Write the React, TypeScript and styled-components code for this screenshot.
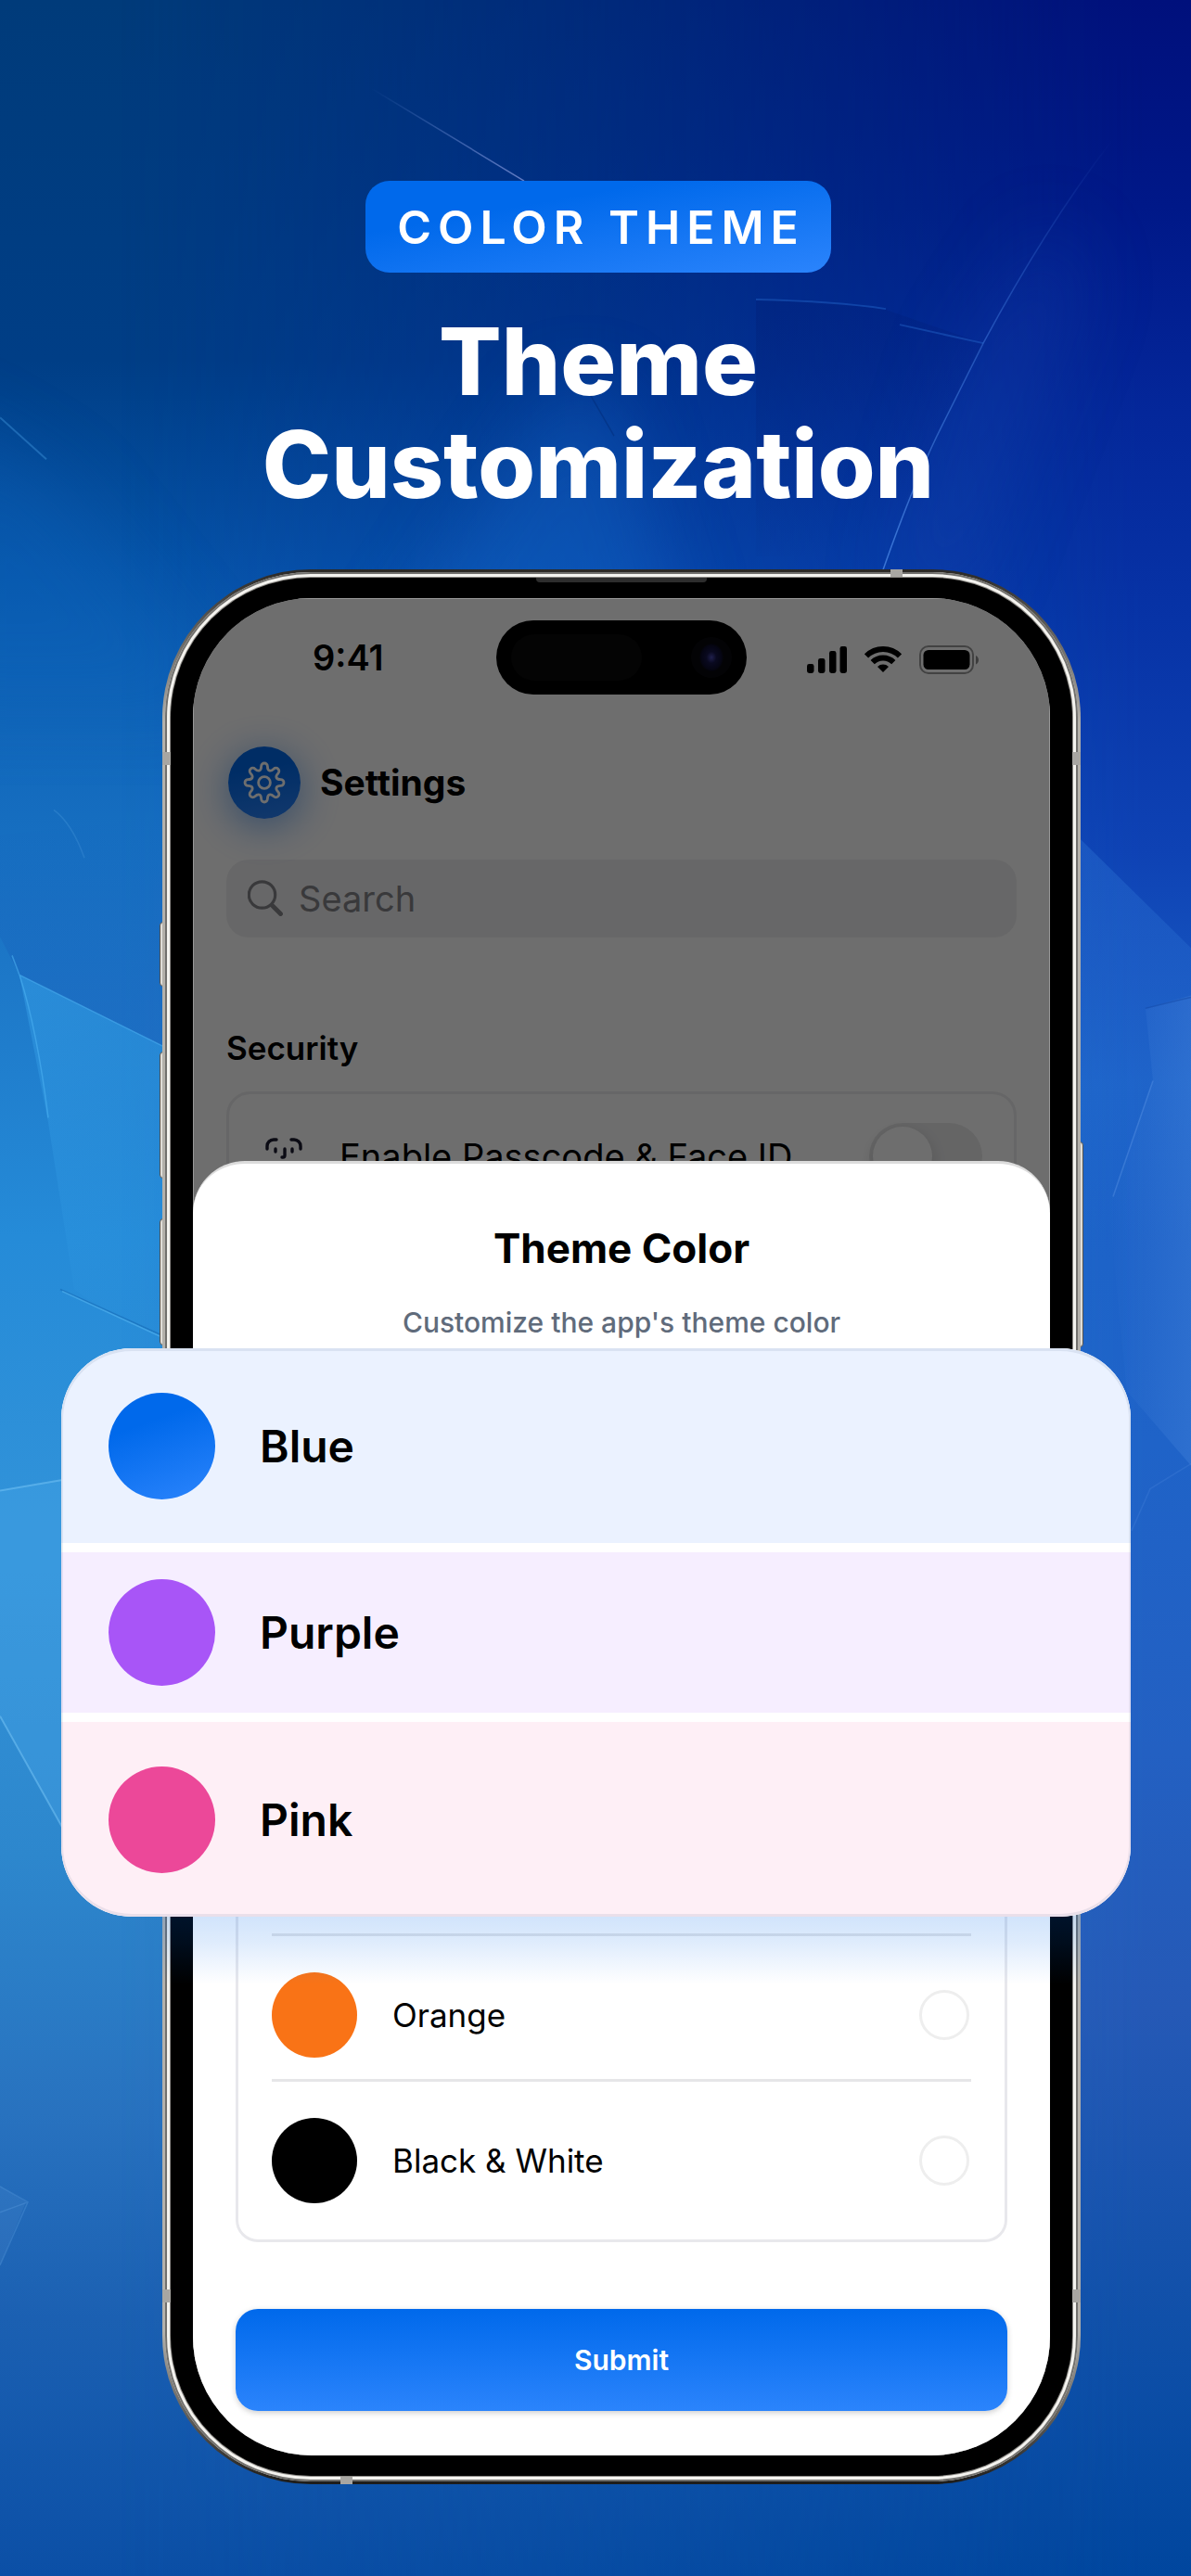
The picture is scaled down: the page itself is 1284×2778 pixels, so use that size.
import styled, { createGlobalStyle, css } from "styled-components";

const GlobalStyle = createGlobalStyle`
  * { box-sizing: border-box; }
  body {
    margin: 0;
    font-family: Inter, "Liberation Sans", sans-serif;
    color: #000;
  }
  button, input { font: inherit; color: inherit; }
`;

const blueGradient = "linear-gradient(170deg, #0069eb 30%, #2b84fc 100%)";

/* ---------- page ---------- */

const Page = styled.main`
  position: relative;
  overflow: hidden;
  background: linear-gradient(
    180deg,
    #003b7a 0%,
    #003e86 14%,
    #0654a8 22%,
    #136abd 30%,
    #1d78c8 38%,
    #258bd8 48%,
    #3293d9 60%,
    #2d87cd 72%,
    #2872bf 82%,
    #1b60b2 90%,
    #0b4fa6 100%
  );

  &::before {
    content: "";
    position: absolute;
    inset: 0;
    background: linear-gradient(
      180deg,
      #00107c 0%,
      #001888 8%,
      #04279a 16%,
      #0733a6 24%,
      #0e42b4 33%,
      #1b5fc6 42%,
      #1f63c8 56%,
      #2360c2 68%,
      #2559b6 78%,
      #1050a9 90%,
      #00469e 100%
    );
    mask-image: linear-gradient(90deg, transparent 10%, rgba(0, 0, 0, 0.4) 50%, #000 96%);
  }
`;

const Facets = styled.svg`
  position: absolute;
  inset: 0;
  width: 100%;
  height: 100%;
`;

const Intro = styled.header`
  position: relative;
  display: flex;
  flex-direction: column;
  align-items: center;
  gap: 40px;
  padding: 195px 92px 58px 98px;
  text-align: center;
  color: #fff;
`;

const Badge = styled.p`
  margin: 0;
  padding: 20px 28px 19px 34px;
  border-radius: 26px;
  background: ${blueGradient};
  font-size: 50px;
  font-weight: 600;
  line-height: 60px;
  letter-spacing: 7px;
`;

const Title = styled.h1`
  margin: 0;
  font-size: 100px;
  font-weight: 800;
  line-height: 111px;
`;

/* ---------- phone ---------- */

const Phone = styled.div`
  position: relative;
  margin: 0 119px 100px 175px;
`;

const Frame = styled.div`
  position: relative;
  padding: 3px;
  border-radius: 160px;
  background: linear-gradient(180deg, #2b2926 0%, #b4b1ab 8%, #b4b1ab 92%, #1d1c1a 100%);
`;

const Rim = styled.div`
  padding: 6px;
  border-radius: 157px;
  background: #f4f3ef;
  box-shadow: inset 0 0 0 2px #71706d;
`;

const Bezel = styled.div`
  padding: 22px 24px;
  border-radius: 151px;
  background: #000;
  box-shadow: 0 0 0 1px #8d8b87;
`;

const SideButton = styled.span<{ $side: "left" | "right"; $top: number; $height: number }>`
  position: absolute;
  top: ${(p) => p.$top}px;
  ${(p) => p.$side}: -3px;
  width: 8px;
  height: ${(p) => p.$height}px;
  border: 1px solid #55534f;
  border-radius: 4px;
  background: #dedcd7;
`;

const band = css`
  position: absolute;
  background: #a8a6a2;
`;

const SideBand = styled.span<{ $side: "left" | "right"; $top: number }>`
  ${band}
  top: ${(p) => p.$top}px;
  ${(p) => p.$side}: 0;
  width: 9px;
  height: 14px;
`;

const EdgeBand = styled.span<{ $edge: "top" | "bottom"; $left: number }>`
  ${band}
  ${(p) => p.$edge}: 0;
  left: ${(p) => p.$left}px;
  width: 13px;
  height: 8px;
`;

const Speaker = styled.span`
  position: absolute;
  top: 9px;
  left: 50%;
  width: 184px;
  height: 5px;
  margin-left: -92px;
  border-radius: 0 0 4px 4px;
  background: #2d2d2d;
`;

const Screen = styled.div`
  display: grid;
  overflow: hidden;
  border-radius: 128px;
  background: #fff;
`;

/* ---------- settings screen under the sheet ---------- */

const Settings = styled.section`
  position: relative;
  grid-area: 1 / 1;

  &::after {
    content: "";
    position: absolute;
    inset: 0;
    background: rgba(0, 0, 0, 0.57);
    box-shadow: inset 0 0 0 1px rgba(255, 255, 255, 0.3);
  }
`;

const StatusBar = styled.div`
  display: grid;
  grid-template-columns: 1fr 270px 1fr;
  align-items: center;
  height: 128px;
`;

const Time = styled.span`
  padding-left: 129px;
  font-size: 38px;
  font-weight: 600;
  line-height: 46px;
`;

const Island = styled.div`
  display: flex;
  align-items: center;
  justify-content: space-between;
  height: 80px;
  padding: 0 16px;
  border-radius: 40px;
  background: #000;
`;

const Sensor = styled.span`
  width: 141px;
  height: 50px;
  border-radius: 25px;
  background: #0a0a0a;
`;

const Lens = styled.span`
  width: 44px;
  height: 44px;
  border-radius: 50%;
  background: radial-gradient(ellipse 60% 70%, #4a4ab4 0, #17174a 20%, #0c0c2c 42%, #08080c 50%);
`;

const StatusIcons = styled.div`
  display: flex;
  align-items: center;
  justify-content: flex-end;
  gap: 19px;
  padding: 4px 76px 0 0;
`;

const SettingsHeader = styled.div`
  display: flex;
  align-items: center;
  gap: 21px;
  padding: 32px 38px 0;
`;

const GearBadge = styled.span`
  display: grid;
  place-items: center;
  width: 78px;
  height: 78px;
  border-radius: 50%;
  background: ${blueGradient};
  box-shadow: 0 8px 44px rgba(0, 105, 235, 0.55);
`;

const SettingsTitle = styled.h2`
  margin: 0;
  font-size: 39px;
  font-weight: 700;
  line-height: 46px;
`;

const SearchField = styled.label`
  display: flex;
  align-items: center;
  gap: 17px;
  height: 84px;
  margin: 44px 36px 0;
  padding: 0 23px;
  border-radius: 24px;
  background: #efeff0;
  color: #85858a;

  input {
    flex: 1;
    min-width: 0;
    padding: 0;
    border: 0;
    outline: 0;
    background: none;
    font-size: 38px;
  }
  input::placeholder {
    color: #85858a;
    opacity: 1;
  }
`;

const GroupTitle = styled.h3`
  margin: 97px 36px 25px;
  font-size: 35px;
  font-weight: 600;
  line-height: 44px;
`;

const GroupCard = styled.div`
  margin: 0 36px;
  padding: 31px 34px 31px 39px;
  border: 3px solid #ededee;
  border-radius: 26px;
`;

const ToggleRow = styled.label`
  display: flex;
  align-items: center;
  gap: 40px;
  font-size: 38px;
  line-height: 46px;
  white-space: nowrap;
`;

const Toggle = styled.input`
  appearance: none;
  flex: none;
  width: 122px;
  height: 72px;
  margin: 0 0 0 auto;
  padding: 4px;
  border-radius: 36px;
  background: #e9e9ea;

  &::before {
    content: "";
    display: block;
    width: 64px;
    height: 64px;
    border-radius: 50%;
    background: #fff;
    box-shadow: 0 6px 16px rgba(0, 0, 0, 0.15);
  }
`;

/* ---------- theme sheet ---------- */

const Sheet = styled.section`
  position: relative;
  grid-area: 1 / 1;
  display: flex;
  flex-direction: column;
  margin-top: 607px;
  padding: 65px 46px 48px;
  border-top: 3px solid #dcdcdc;
  border-radius: 56px 56px 0 0;
  background: #fff;
`;

const SheetTitle = styled.h2`
  margin: 0 0 36px;
  font-size: 44px;
  font-weight: 700;
  line-height: 52px;
  text-align: center;
`;

const SheetText = styled.p`
  margin: 0 0 57px;
  font-size: 30px;
  font-weight: 500;
  line-height: 36px;
  text-align: center;
  color: #606b7b;
`;

const ColorList = styled.div`
  padding: 581px 36px 16px;
  border: 3px solid #e8e8ec;
  border-radius: 24px;
`;

const ColorRow = styled.label`
  display: flex;
  align-items: center;
  gap: 38px;
  padding: 39px 0 23px;
  border-top: 3px solid #e6e6e8;
  font-size: 35px;
  line-height: 44px;
`;

const Swatch = styled.span<{ $fill: string; $size: number }>`
  flex: none;
  width: ${(p) => p.$size}px;
  height: ${(p) => p.$size}px;
  border-radius: 50%;
  background: ${(p) => p.$fill};
`;

const Radio = styled.input`
  appearance: none;
  width: 54px;
  height: 54px;
  margin: 0 2px 0 auto;
  border: 3px solid #eeeeee;
  border-radius: 50%;
  background: #fff;
`;

const Submit = styled.button`
  height: 110px;
  margin-top: 72px;
  border: 0;
  border-radius: 24px;
  background: linear-gradient(180deg, #0069eb, #2b84fc);
  box-shadow: 0 2px 6px rgba(0, 0, 0, 0.2);
  font-size: 30px;
  font-weight: 600;
  color: #fff;
`;

/* ---------- enlarged colour picker ---------- */

const Picker = styled.div`
  position: absolute;
  top: 840px;
  left: -109px;
  right: -54px;
  display: grid;
  grid-template-rows: 210px 173px 210px;
  gap: 10px;
  overflow: hidden;
  border-radius: 76px;
  background: #fff;

  &::after {
    content: "";
    position: absolute;
    inset: 0;
    border: 2px solid rgba(60, 90, 130, 0.1);
    border-width: 3px 2px;
    border-radius: 76px;
    pointer-events: none;
  }
`;

const PickerGlow = styled.div`
  position: absolute;
  top: 1380px;
  left: 0;
  right: 0;
  height: 146px;
  background: linear-gradient(180deg, rgba(0, 105, 235, 0.18) 50%, rgba(0, 105, 235, 0.13) 68%, rgba(0, 105, 235, 0) 100%);
`;

const PickerRow = styled.button<{ $tint: string }>`
  display: flex;
  align-items: center;
  gap: 48px;
  padding: 0 51px;
  border: 0;
  background: ${(p) => p.$tint};
  font-size: 48px;
  font-weight: 600;
  text-align: left;
`;

/* ---------- drawings ---------- */

const GearIcon = () => {
  // eight round teeth, joined by u-shaped valleys
  const point = (k: number, side: number, inward: number) => {
    const a = (k * Math.PI) / 4;
    const r = 17.6 - inward;
    const x = 24 + Math.sin(a) * r + Math.cos(a) * side;
    const y = 24 - Math.cos(a) * r + Math.sin(a) * side;
    return `${x.toFixed(2)} ${y.toFixed(2)}`;
  };
  let d = `M${point(0, -3.4, 0)}`;
  for (let k = 0; k < 8; k++) {
    d += `A3.4 3.4 0 0 1 ${point(k, 3.4, 0)}C${point(k, 3.4, 5)} ${point(k + 1, -3.4, 5)} ${point(k + 1, -3.4, 0)}`;
  }
  return (
    <svg width="48" height="48" viewBox="0 0 48 48" fill="none" stroke="#fff" strokeWidth="2.8">
      <path d={d + "Z"} strokeLinejoin="round" />
      <circle cx="24" cy="24" r="6.4" />
    </svg>
  );
};

const SearchIcon = () => (
  <svg width="38" height="40" viewBox="0 0 38 40" fill="none" stroke="currentColor" strokeLinecap="round">
    <circle cx="15.5" cy="16" r="14.2" strokeWidth="3.2" />
    <path d="M27 28 35.5 36.5" strokeWidth="4.8" />
  </svg>
);

const FaceIcon = () => (
  <svg width="40" height="40" viewBox="0 0 40 40" fill="none" stroke="#1b1b30" strokeWidth="3.4" strokeLinecap="round" strokeLinejoin="round">
    <path d="M2 12V9a7 7 0 0 1 7-7h3M28 2h3a7 7 0 0 1 7 7v3M38 28v3a7 7 0 0 1-7 7h-3M12 38H9a7 7 0 0 1-7-7v-3" />
    <path d="M11 12v3M29 12v3M21 12v7a2 2 0 0 1-2 2h-1M12 28c5 4 11 4 16 0" />
  </svg>
);

const SignalIcon = () => (
  <svg width="43" height="29" viewBox="0 0 43 29">
    <rect x="0" y="19" width="7.5" height="10" rx="2.4" />
    <rect x="12" y="13" width="7.5" height="16" rx="2.4" />
    <rect x="24" y="5" width="7.5" height="24" rx="2.4" />
    <rect x="35.5" y="0" width="7.5" height="29" rx="2.4" />
  </svg>
);

const WifiIcon = () => (
  <svg width="40" height="29" viewBox="0 0 40 29" fill="none" stroke="#000" strokeWidth="6">
    <path d="M2 10.5a25.5 25.5 0 0 1 36 0" />
    <path d="M8.7 17.2a16 16 0 0 1 22.6 0" />
    <path d="M14 22a8.6 8.6 0 0 1 12 0l-6 6z" fill="#000" stroke="none" />
  </svg>
);

const BatteryIcon = () => (
  <svg width="65" height="31" viewBox="0 0 65 31">
    <rect x="1" y="1" width="57" height="29" rx="9" fill="none" stroke="#000" strokeOpacity="0.4" strokeWidth="2" />
    <rect x="4.5" y="5" width="50" height="21" rx="5.5" />
    <path d="M61 11c4 1.5 4 8 0 9.5z" fillOpacity="0.45" />
  </svg>
);

const Backdrop = () => (
  <Facets viewBox="0 0 1284 2778" preserveAspectRatio="none" aria-hidden="true">
    <defs>
      <filter id="soft" x="-50%" y="-50%" width="200%" height="200%" colorInterpolationFilters="sRGB">
        <feGaussianBlur stdDeviation="40" />
      </filter>
      <linearGradient id="shade" x1="0" y1="0" x2="0.3" y2="1">
        <stop offset="0" stopColor="#001a70" stopOpacity="0.3" />
        <stop offset="1" stopColor="#001a70" stopOpacity="0" />
      </linearGradient>
      <linearGradient id="dusk" x1="0" y1="0" x2="0" y2="1">
        <stop offset="0" stopColor="#0f52b4" stopOpacity="0" />
        <stop offset="1" stopColor="#1a5cb8" stopOpacity="0.45" />
      </linearGradient>
      <linearGradient id="aqua" x1="0.3" y1="0" x2="0.5" y2="1">
        <stop offset="0" stopColor="#3ba8ee" stopOpacity="0.4" />
        <stop offset="1" stopColor="#3ba8ee" stopOpacity="0" />
      </linearGradient>
      <linearGradient id="sky" x1="0" y1="0" x2="1" y2="0">
        <stop offset="0" stopColor="#4f8ce0" stopOpacity="0" />
        <stop offset="1" stopColor="#4f8ce0" stopOpacity="0.3" />
      </linearGradient>
      <linearGradient id="ray" x1="0" y1="0" x2="0" y2="1">
        <stop offset="0" stopColor="#3f8fe8" stopOpacity="0.25" />
        <stop offset="1" stopColor="#3f8fe8" stopOpacity="0" />
      </linearGradient>
      <linearGradient id="line" x1="0" y1="0" x2="1" y2="1">
        <stop offset="0" stopColor="#7fa4ee" stopOpacity="0" />
        <stop offset="1" stopColor="#8f9ee0" stopOpacity="0.7" />
      </linearGradient>
      <linearGradient id="crease" x1="0" y1="0" x2="0" y2="1">
        <stop offset="0" stopColor="#4f8ff0" stopOpacity="0" />
        <stop offset="0.5" stopColor="#4f8ff0" stopOpacity="0.45" />
        <stop offset="1" stopColor="#5f9ff8" stopOpacity="0.6" />
      </linearGradient>
    </defs>
    <g filter="url(#soft)">
      <path d="M600 420 660 420 760 760H380Z" fill="#1c7ce0" fillOpacity="0.25" />
      <path d="M-80 440 60 520 250 760H-80Z" fill="#0c68c0" fillOpacity="0.3" />
      <path d="M1040 380 1130 240 1170 300 1040 640 960 640Z" fill="#1a48b4" fillOpacity="0.25" />
    </g>
    <path d="M400 95 565 195" stroke="url(#line)" strokeWidth="1.5" />
    <path d="M1200 150Q1130 240 1060 370L1015 460Q985 520 950 620" fill="none" stroke="url(#crease)" strokeWidth="1.5" />
    <path d="M815 323Q900 325 955 334L1060 370 1015 460 960 600 815 600Z" fill="url(#shade)" />
    <path d="M815 323Q900 325 955 333M970 350 1060 370" fill="none" stroke="#2d78dc" strokeOpacity="0.35" strokeWidth="2" />
    <path d="M636 425 662 470" stroke="#00256e" strokeOpacity="0.4" strokeWidth="1.5" />
    <path d="M0 450 50 495" stroke="#4fa8ee" strokeOpacity="0.35" strokeWidth="2" />
    <path d="M58 873Q78 888 91 925" fill="none" stroke="#6db8f2" strokeOpacity="0.2" strokeWidth="1.5" />
    <path d="M21 1051 180 1130V880L0 900V1010Z" fill="url(#dusk)" />
    <path d="M21 1051 180 1130V1460L80 1390 52 1210Z" fill="url(#aqua)" />
    <path d="M21 1051 180 1130M13 1030 21 1051Q40 1110 52 1205" fill="none" stroke="#4fb4f4" strokeOpacity="0.55" strokeWidth="1.5" />
    <path d="M65 1390 180 1442" stroke="#1263b0" strokeOpacity="0.5" strokeWidth="1.5" />
    <path d="M67 1392 180 1444" stroke="#5cbcf6" strokeOpacity="0.5" strokeWidth="1.5" />
    <path d="M0 1607 70 1595V1975L0 1850Z" fill="#4ba8ea" fillOpacity="0.3" />
    <path d="M0 1607 70 1595M0 1850 70 1975" stroke="#7ac8f8" strokeOpacity="0.5" strokeWidth="2" />
    <path d="M1160 900 1284 1022V1340H1160Z" fill="url(#ray)" />
    <path d="M1284 1073 1235 1087 1243 1165 1195 1300 1215 1500 1284 1580Z" fill="url(#sky)" />
    <path d="M1284 1075 1235 1087" stroke="#0d3f9c" strokeOpacity="0.4" strokeWidth="1.5" />
    <path d="M1243 1165 1200 1290" stroke="#6fa6ee" strokeOpacity="0.3" strokeWidth="1.5" />
    <path d="M1284 1578 1240 1605 1220 1650" fill="none" stroke="#5e97e8" strokeOpacity="0.2" strokeWidth="1.5" />
    <path d="M0 2357 28 2374 0 2442Z" fill="#6da0dc" fillOpacity="0.15" />
    <path d="M0 2357 30 2374 0 2442M0 2385 30 2374" fill="none" stroke="#6fb0ea" strokeOpacity="0.25" strokeWidth="1.5" />
  </Facets>
);

const featured = [
  { name: "Blue", fill: "linear-gradient(160deg, #0069eb 30%, #2b84fc 100%)", tint: "#ebf2ff" },
  { name: "Purple", fill: "#a855f7", tint: "#f6eeff" },
  { name: "Pink", fill: "#ec4899", tint: "#feeff6" },
];

const others = [
  { name: "Orange", fill: "#f97316" },
  { name: "Black & White", fill: "#000" },
];

export default function App() {
  return (
    <Page>
      <GlobalStyle />
      <Backdrop />
      <Intro>
        <Badge>COLOR THEME</Badge>
        <Title>
          Theme
          <br />
          Customization
        </Title>
      </Intro>
      <Phone>
        <SideButton $side="left" $top={380} $height={70} />
        <SideButton $side="left" $top={520} $height={137} />
        <SideButton $side="left" $top={700} $height={137} />
        <SideButton $side="right" $top={617} $height={222} />
        <Frame>
          <Rim>
            <Bezel>
              <Screen>
                <Settings>
                  <StatusBar>
                    <Time>9:41</Time>
                    <Island>
                      <Sensor />
                      <Lens />
                    </Island>
                    <StatusIcons>
                      <SignalIcon />
                      <WifiIcon />
                      <BatteryIcon />
                    </StatusIcons>
                  </StatusBar>
                  <SettingsHeader>
                    <GearBadge>
                      <GearIcon />
                    </GearBadge>
                    <SettingsTitle>Settings</SettingsTitle>
                  </SettingsHeader>
                  <SearchField>
                    <SearchIcon />
                    <input type="search" placeholder="Search" aria-label="Search" />
                  </SearchField>
                  <GroupTitle>Security</GroupTitle>
                  <GroupCard>
                    <ToggleRow>
                      <FaceIcon />
                      Enable Passcode &amp; Face ID
                      <Toggle type="checkbox" role="switch" />
                    </ToggleRow>
                  </GroupCard>
                </Settings>
                <Sheet>
                  <SheetTitle>Theme Color</SheetTitle>
                  <SheetText>Customize the app's theme color</SheetText>
                  <ColorList>
                    {others.map((color) => (
                      <ColorRow key={color.name}>
                        <Swatch $fill={color.fill} $size={92} />
                        {color.name}
                        <Radio type="radio" name="theme" />
                      </ColorRow>
                    ))}
                  </ColorList>
                  <Submit type="button">Submit</Submit>
                </Sheet>
              </Screen>
            </Bezel>
          </Rim>
          <Speaker />
          <SideBand $side="left" $top={197} />
          <SideBand $side="right" $top={197} />
          <SideBand $side="left" $top={1855} />
          <SideBand $side="right" $top={1855} />
          <EdgeBand $edge="top" $left={785} />
          <EdgeBand $edge="bottom" $left={192} />
        </Frame>
        <PickerGlow />
        <Picker>
          {featured.map((color) => (
            <PickerRow key={color.name} type="button" $tint={color.tint}>
              <Swatch $fill={color.fill} $size={115} />
              {color.name}
            </PickerRow>
          ))}
        </Picker>
      </Phone>
    </Page>
  );
}
